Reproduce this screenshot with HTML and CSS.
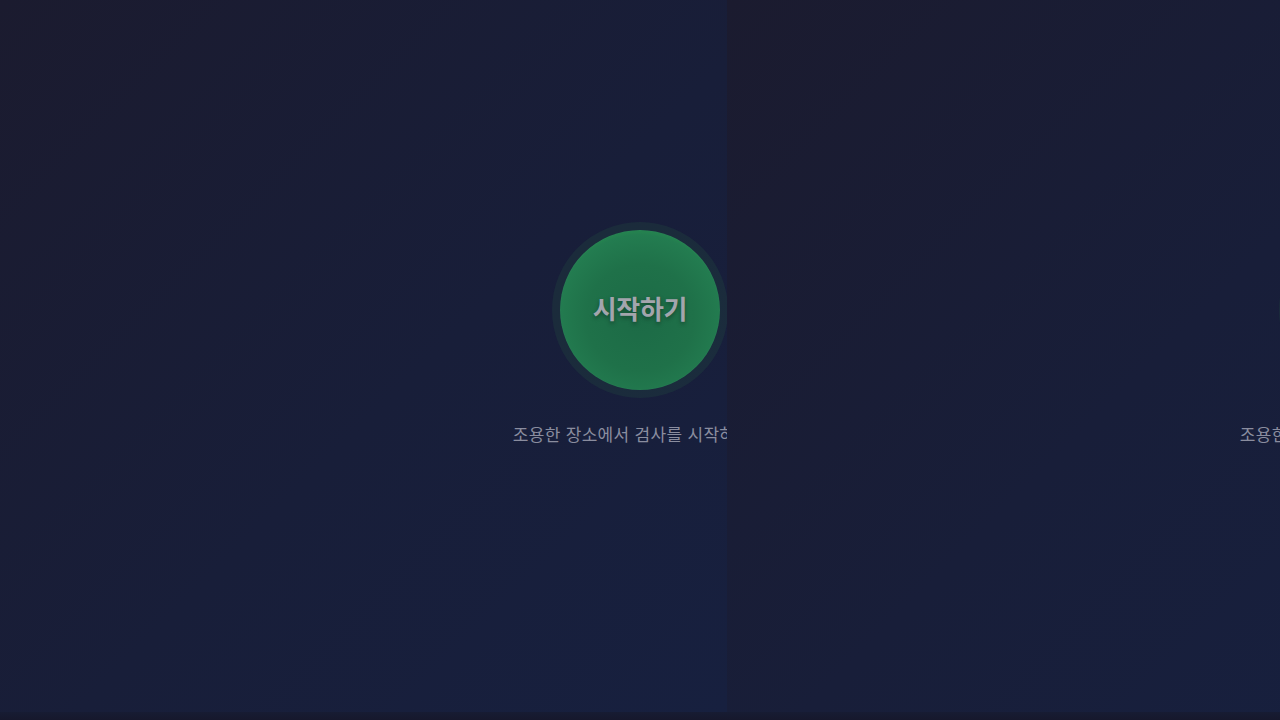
FILE: index.html
```html
<!DOCTYPE html>
<html lang="ko">
<head>
<meta charset="utf-8">
<link rel="stylesheet" href="styles.css">
</head>
<body>
<div class="track">
  <section class="slide">
    <div class="inner">
      <button class="start"><span>시작하기</span></button>
      <p class="hint">조용한 장소에서 검사를 시작하세요</p>
    </div>
  </section>
  <section class="slide">
    <div class="inner">
      <button class="start"><span>시작하기</span></button>
      <p class="hint">조용한 장소에서 검사를 시작하세요</p>
    </div>
  </section>
</div>
<div class="bottom"></div>
</body>
</html>
```
FILE: styles.css
```css
* { box-sizing: border-box; }
html, body {
  margin: 0;
  width: 1280px;
  height: 720px;
  overflow: hidden;
  background: #18182a;
  font-family: "Noto Sans CJK KR", "Noto Sans", sans-serif;
}
.track {
  display: flex;
  width: 1280px;
  height: 712px;
  overflow: hidden;
}
.slide {
  flex: 0 0 727px;
  height: 712px;
  overflow: hidden;
  background: linear-gradient(135deg, #1b1b2f 0%, #181e39 55%, #17203f 100%);
}
.inner {
  width: 1280px;
  height: 712px;
  display: flex;
  flex-direction: column;
  align-items: center;
  padding-top: 230px;
}
.start {
  width: 160px;
  height: 160px;
  border-radius: 50%;
  border: none;
  padding: 0;
  background: radial-gradient(circle at 50% 55%, #1c6a46 0%, #1f7149 45%, #237c50 70%, #24814f 72%, #288a58 100%);
  box-shadow: 0 0 0 8px rgba(32, 60, 62, 0.45), inset 0 0 2px rgba(255,255,255,0.05);
  display: flex;
  align-items: center;
  justify-content: center;
  font-family: inherit;
}
.start span {
  color: #a3a5ad;
  font-size: 26px;
  font-weight: 700;
  letter-spacing: -0.3px;
  text-shadow: 0 2px 4px rgba(0, 0, 0, 0.35);
  margin-top: -5px;
}
.hint {
  margin: 32px 0 0;
  color: #8a8d9f;
  font-size: 17px;
  letter-spacing: 0.3px;
  line-height: 24px;
  white-space: nowrap;
}
.bottom {
  height: 8px;
  background: linear-gradient(#171c33, #16182c);
}
```
